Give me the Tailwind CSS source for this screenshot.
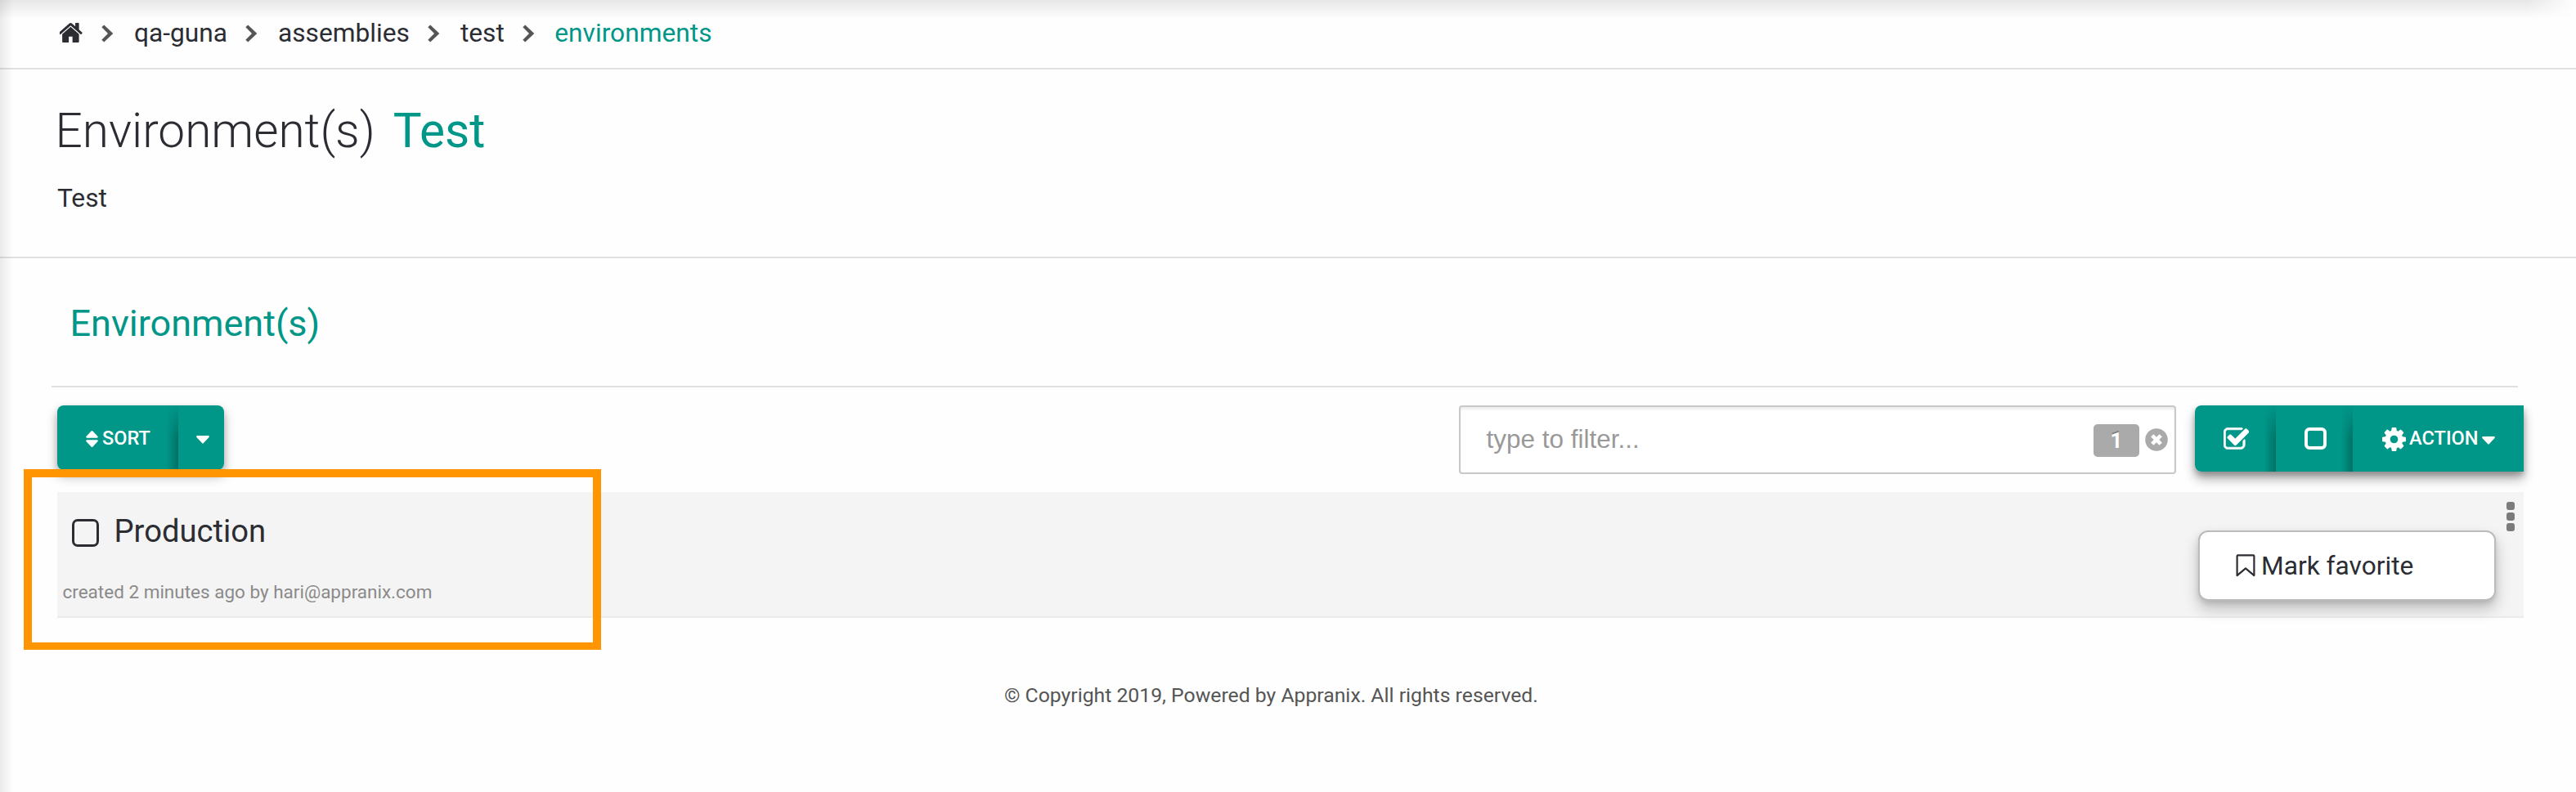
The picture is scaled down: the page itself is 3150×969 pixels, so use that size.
<!DOCTYPE html>
<html lang="en">
<head>
<meta charset="utf-8">
<title>Environments</title>
<script src="https://cdn.jsdelivr.net/npm/@tailwindcss/browser@4"></script>
</head>
<body class="relative h-[969px] overflow-hidden bg-[#fefefe] font-['Roboto',sans-serif] text-[#2b2d33]">
<svg class="hidden">
  <symbol id="chevron" viewBox="0 0 15 22"><path d="M0.300 3.300 3.200 .5 14.300 11 3.200 21.500 .300 18.700 8 11z" fill="#555"/></symbol>
  <symbol id="caret" viewBox="0 0 16 10"><path d="M1.200 0h13.600q1 .1 1 1t-.5 1.200L9 9Q8 10 7 9L.6 2.200Q.1 1.800 .2 1T1.200 0z" fill="#fff"/></symbol>
</svg>

<nav class="flex h-[85px] items-center border-b-2 border-[#e0e0e0] pb-px pl-[72.500px] text-[31.700px] leading-[80px]">
  <svg class="-mt-[2px] h-[24px] w-[29px]" viewBox="81 253 1630 1283" preserveAspectRatio="none"><path fill="#2b2d33" d="M1408 992v480q0 26-19 45t-45 19h-384v-384h-256v384h-384q-26 0-45-19t-19-45v-480q0-1 .5-3t.5-3l575-474 575 474q1 2 1 6zm223-69l-62 74q-8 9-21 11h-3q-13 0-21-7l-692-577-692 577q-12 8-24 7-13-2-21-11l-62-74q-8-10-7-23.5t11-21.5l719-599q32-26 76-26t76 26l244 204v-195q0-14 9-23t23-9h192q14 0 23 9t9 23v408l219 182q10 8 11 21.5t-7 23.5z"/></svg>
  <svg class="ml-[22.500px] mr-[25px] h-[22px] w-[15px]"><use href="#chevron"/></svg>
  <a>qa-guna</a>
  <svg class="ml-[22px] mr-[25px] h-[22px] w-[15px]"><use href="#chevron"/></svg>
  <a>assemblies</a>
  <svg class="ml-[22px] mr-[25px] h-[22px] w-[15px]"><use href="#chevron"/></svg>
  <a>test</a>
  <svg class="ml-[22px] mr-[24.500px] h-[22px] w-[15px]"><use href="#chevron"/></svg>
  <a class="text-[#009688]">environments</a>
</nav>

<header class="h-[231px] border-b-2 border-[#e0e0e0] pt-[40px]">
  <h1 class="flex gap-[22px] pl-[67.500px] text-[58.500px] font-light leading-[70px]"><span>Environment(s)</span><b class="font-normal text-[#009688]">Test</b></h1>
  <p class="mt-[28px] pl-[70px] text-[31.700px] leading-[40px]">Test</p>
</header>

<main>
  <h2 class="ml-[63px] mr-[71px] h-[158px] border-b-2 border-[#e0e0e0] pl-[22.500px] pt-[50px] text-[45px] leading-[60px] text-[#009688]">Environment(s)</h2>

  <div class="mt-[22px] flex h-[106px] items-start pl-[70px] pr-[64px]">
    <div class="flex h-[79px] rounded-[8px] shadow-[0_8px_14px_rgba(0,0,0,0.28),0_3px_8px_rgba(0,0,0,0.15)]">
      <button class="flex w-[148px] items-center rounded-l-[8px] bg-[#009688] pl-[35px] pt-[3px] text-[23.500px] font-medium text-white">
        <svg class="mr-[5px] h-[20px] w-[15px]" viewBox="0 0 15 20" fill="#fff"><path d="M7.500 0q.6 0 1 .5L14.600 7q.6.900-.6 1.700H1Q-.2 7.900 .4 7L6.500 .5Q6.900 0 7.500 0zM7.500 20q.6 0 1-.5L14.600 13q.6-.900-.6-1.700H1Q-.2 12.100 .4 13L6.500 19.500Q6.900 20 7.500 20z"/></svg>SORT
      </button>
      <button class="relative flex w-[56px] items-center justify-center rounded-r-[8px] bg-[#009688] pl-[3px]">
        <span class="absolute -left-[14px] top-0 h-full w-[14px] bg-linear-to-l from-black/25 to-transparent mask-t-from-50% mask-t-to-100%"></span>
        <svg class="mt-[5px] h-[10px] w-[16px]"><use href="#caret"/></svg>
      </button>
    </div>

    <div class="ml-auto flex h-[84px] w-[877px] items-center rounded-[4px] border-2 border-[#c8c8c8] bg-white pl-[31.500px] pr-[8px] font-['Liberation_Sans',sans-serif] text-[31.500px] text-[#999] shadow-[inset_0_3px_3px_rgba(0,0,0,0.07)]">
      <span class="flex-1">type to filter...</span>
      <span class="mr-[7px] mt-[2px] flex h-[40px] w-[56px] items-center justify-center rounded-[5px] bg-[#aaa] font-['Roboto',sans-serif] text-[26px] font-bold text-white text-shadow-[0_-2px_0_rgba(0,0,0,0.25)]">1</span>
      <svg class="h-[28px] w-[28px]" viewBox="0 0 28 28"><circle cx="14" cy="14" r="13.800" fill="#aaa"/><path d="M8.800 8.800l10.400 10.400M19.200 8.800L8.800 19.200" stroke="#fff" stroke-width="4.600"/></svg>
    </div>

    <div class="ml-[23px] flex h-[81px] rounded-l-[8px] shadow-[0_9px_14px_rgba(0,0,0,0.32),0_4px_7px_rgba(0,0,0,0.22)]">
      <button class="flex w-[99px] items-center rounded-l-[8px] bg-[#009688] pl-[35px]">
        <svg class="h-[27px] w-[31px]" viewBox="64 256 1664 1408" fill="#fff"><path d="M1472 930v318q0 119-84.500 203.500t-203.500 84.500h-832q-119 0-203.500-84.500t-84.500-203.500v-832q0-119 84.500-203.500t203.500-84.500h832q63 0 117 25 15 7 18 23 3 17-9 29l-49 49q-10 10-23 10-3 0-9-2-23-6-45-6h-832q-66 0-113 47t-47 113v832q0 66 47 113t113 47h832q66 0 113-47t47-113v-254q0-13 9-22l64-64q10-10 23-10 6 0 12 3 20 8 20 29zm231-489l-814 814q-24 24-57 24t-57-24l-430-430q-24-24-24-57t24-57l110-110q24-24 57-24t57 24l263 263 647-647q24-24 57-24t57 24l110 110q24 24 24 57t-24 57z" transform="translate(0 128)" stroke="#fff" stroke-width="40"/></svg>
      </button>
      <button class="relative flex w-[94px] items-center bg-[#009688] pl-[35px]">
        <span class="absolute -left-[14px] top-0 h-full w-[14px] bg-linear-to-l from-black/25 to-transparent mask-t-from-50% mask-t-to-100%"></span>
        <span class="h-[27px] w-[27px] rounded-[6px] border-[4px] border-white"></span>
      </button>
      <button class="relative flex w-[209px] items-center bg-[#009688] pl-[35.500px] text-[23.600px] font-medium text-white">
        <span class="absolute -left-[14px] top-0 h-full w-[14px] bg-linear-to-l from-black/25 to-transparent mask-t-from-50% mask-t-to-100%"></span>
        <svg class="mr-[4.500px] mt-[2px] h-[29px] w-[29px]" viewBox="128 128 1536 1536" fill="#fff"><path d="M1152 896q0-106-75-181t-181-75-181 75-75 181 75 181 181 75 181-75 75-181zm512-109v222q0 12-8 23t-20 13l-185 28q-19 54-39 91 35 50 107 138 10 12 10 25t-9 23q-27 37-99 108t-94 71q-12 0-26-9l-138-108q-44 23-91 38-16 136-29 186-7 28-36 28h-222q-14 0-24.500-8.500t-11.500-21.500l-28-184q-49-16-90-37l-141 107q-10 9-25 9-14 0-25-11-126-114-165-168-7-10-7-23 0-12 8-23 15-21 51-66.500t54-70.500q-27-50-41-99l-183-27q-13-2-21-12.500t-8-23.500v-222q0-12 8-23t19-13l186-28q14-46 39-92-40-57-107-138-10-12-10-24 0-10 9-23 26-36 98.500-107.500t94.500-71.500q13 0 26 10l138 107q44-23 91-38 16-136 29-186 7-28 36-28h222q14 0 24.500 8.500t11.500 21.500l28 184q49 16 90 37l142-107q9-9 24-9 13 0 25 10 129 119 165 170 7 8 7 22 0 12-8 23-15 21-51 66.500t-54 70.500q26 50 41 98l183 28q13 2 21 12.500t8 23.500z"/></svg>ACTION<svg class="ml-[4px] mt-[4px] h-[10px] w-[16px]"><use href="#caret"/></svg>
      </button>
    </div>
  </div>

  <section class="relative ml-[70px] mr-[64px] h-[154px] border-b-2 border-[#ebebeb] bg-[#f4f4f4] pt-[23px]">
    <div class="flex items-start">
      <span class="ml-[18px] mt-[10px] h-[34px] w-[33px] rounded-[7px] border-[3px] border-[#2b2d33]"></span>
      <span class="ml-[18.500px] text-[38.200px] leading-[50px]">Production</span>
    </div>
    <p class="ml-[6.500px] mt-[33px] text-[22.500px] leading-[32px] text-[#8a8a8a]">created 2 minutes ago by hari@appranix.com</p>
    <div class="absolute right-[11px] top-[12px] flex flex-col gap-[3px]">
      <i class="h-[10px] w-[10px] rounded-[3px] bg-[#7b7b7b]"></i><i class="h-[10px] w-[10px] rounded-[3px] bg-[#7b7b7b]"></i><i class="h-[10px] w-[10px] rounded-[3px] bg-[#7b7b7b]"></i>
    </div>
    <div class="absolute right-[34px] top-[47px] flex h-[86px] w-[364px] items-center rounded-[12px] border-2 border-[#bbb] bg-white pl-[44px] pt-[2px] text-[31.700px] shadow-[0_10px_18px_rgba(0,0,0,0.22),0_3px_6px_rgba(0,0,0,0.1)]">
      <svg class="-mt-[2px] mr-[7px] h-[28px] w-[24px]" viewBox="0 0 24 28" fill="none" stroke="#2b2d33" stroke-width="2.200"><path d="M1.600 2.400q0-1 1-1H21.400q1 0 1 1V26.100L12 17.300 1.600 26.100z" stroke-linejoin="round"/></svg>Mark favorite
    </div>
  </section>
</main>

<footer class="pl-[1228px] pt-[75px] text-[24.750px] leading-[40px] text-[#555]">© Copyright 2019, Powered by Appranix. All rights reserved.</footer>

<div class="absolute left-[29px] top-[574px] h-[221px] w-[706px] border-[10px] border-b-[9px] border-[#ff9500]"></div>
<div class="absolute left-0 right-0 top-0 h-[24px] bg-linear-to-b from-black/9 to-transparent mask-r-from-[3090px] mask-r-to-[3150px]"></div>
<div class="absolute bottom-0 left-0 top-0 w-[16px] bg-linear-to-r from-black/8 to-transparent"></div>
</body>
</html>
